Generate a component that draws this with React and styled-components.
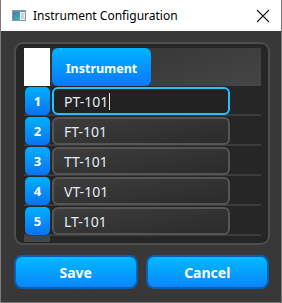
import styled, { createGlobalStyle } from "styled-components";

const GlobalStyle = createGlobalStyle`
  html, body {
    margin: 0;
    padding: 0;
    background: #ffffff;
  }
  * {
    box-sizing: border-box;
  }
`;

const Window = styled.div`
  width: 282px;
  height: 303px;
  display: flex;
  flex-direction: column;
  border: 1px solid #7b7b7b;
  border-top: none;
  font-family: "Noto Sans", "Open Sans", sans-serif;
`;

const TitleBar = styled.div`
  height: 31px;
  display: flex;
  align-items: center;
  background: #ffffff;
  padding: 0 10px 0 11px;
`;

const TitleText = styled.span`
  margin-left: 7px;
  font-size: 12px;
  color: #000000;
  flex: 1;
`;

const CloseButton = styled.div`
  width: 14px;
  height: 14px;
  margin-right: 1px;
  display: flex;
`;

const Body = styled.div`
  flex: 1;
  display: flex;
  flex-direction: column;
  gap: 10px;
  background: #383838;
  padding: 11px 11px 13px 13px;
`;

const Panel = styled.div`
  height: 203px;
  border: 2px solid #4d4d4d;
  border-radius: 9px;
  background: #262627;
  padding: 4px 7px 1px 8px;
  display: flex;
  flex-direction: column;
`;

const HeaderRow = styled.div`
  height: 38px;
  display: flex;
  background: linear-gradient(160deg, #303030 0%, #454545 100%);
`;

const Corner = styled.div`
  width: 26px;
  background: #ffffff;
`;

const HeaderCell = styled.div`
  width: 99px;
  margin-left: 2px;
  border-radius: 6px;
  background: linear-gradient(180deg, #00b3ff 0%, #0a78ff 100%);
  color: #ffffff;
  font-weight: 700;
  font-size: 12.5px;
  display: flex;
  align-items: center;
  justify-content: center;
  padding-top: 3px;
`;

const Row = styled.div`
  height: 30px;
  display: flex;
  align-items: center;
  background: linear-gradient(180deg, transparent 0, transparent 28px, #3c3c3c 28px);
`;

const RowNumber = styled.div`
  width: 25px;
  height: 28px;
  margin-left: 1px;
  border-radius: 5px;
  background: linear-gradient(180deg, #00b0ff 0%, #0a72f0 100%);
  color: #ffffff;
  font-weight: 700;
  font-size: 13px;
  display: flex;
  align-items: center;
  justify-content: center;
`;

const Field = styled.div`
  width: 178px;
  height: 28px;
  margin-left: 2px;
  border-radius: 6px;
  border: 2px solid ${(p) => (p.$focused ? "#1ec3ff" : "#555555")};
  background: ${(p) =>
    p.$focused ? "#222222" : "linear-gradient(170deg, #3d3d3d 0%, #2b2b2b 100%)"};
  color: #e3ebf4;
  font-size: 14px;
  display: flex;
  align-items: center;
  padding-left: 10px;
`;

const Caret = styled.span`
  display: inline-block;
  width: 1px;
  height: 17px;
  margin-left: 1px;
  background: #e8e8e8;
`;

const NumberFiller = styled.div`
  width: 26px;
  flex: 1;
  background: #444444;
`;

const Footer = styled.div`
  flex: 1;
  display: flex;
  gap: 8px;
  padding-right: 1px;
`;

const Button = styled.div`
  flex: 1;
  border-radius: 8px;
  border: 2px solid #0b5fae;
  background: linear-gradient(180deg, #00baff 0%, #0a86ff 100%);
  color: #ffffff;
  font-weight: 700;
  font-size: 14px;
  display: flex;
  align-items: center;
  justify-content: center;
`;

const WindowIcon = () => (
  <svg width="14" height="11" viewBox="0 0 14 11">
    <defs>
      <linearGradient id="ig" x1="0" y1="0" x2="1" y2="1">
        <stop offset="0" stopColor="#3d78b8" />
        <stop offset="1" stopColor="#4fb3a8" />
      </linearGradient>
    </defs>
    <rect x="0.5" y="0.5" width="13" height="10" fill="#e8ecf0" stroke="#8c96a0" />
    <rect x="1" y="2" width="7" height="8" fill="url(#ig)" />
    <rect x="1" y="1" width="12" height="1" fill="#6f8fb0" />
    <rect x="9" y="3" width="3" height="6" fill="#c9d4de" />
  </svg>
);

const CloseIcon = () => (
  <svg width="14" height="14" viewBox="0 0 14 14">
    <path d="M1 1 L13 13 M13 1 L1 13" stroke="#1a1a1a" strokeWidth="1.1" />
  </svg>
);

const instruments = ["PT-101", "FT-101", "TT-101", "VT-101", "LT-101"];

function App() {
  return (
    <>
      <GlobalStyle />
      <Window>
        <TitleBar>
          <WindowIcon />
          <TitleText>Instrument Configuration</TitleText>
          <CloseButton>
            <CloseIcon />
          </CloseButton>
        </TitleBar>
        <Body>
          <Panel>
            <HeaderRow>
              <Corner />
              <HeaderCell>Instrument</HeaderCell>
            </HeaderRow>
            {instruments.map((name, i) => (
              <Row key={name}>
                <RowNumber>{i + 1}</RowNumber>
                <Field $focused={i === 0}>
                  {name}
                  {i === 0 && <Caret />}
                </Field>
              </Row>
            ))}
            <NumberFiller />
          </Panel>
          <Footer>
            <Button>Save</Button>
            <Button>Cancel</Button>
          </Footer>
        </Body>
      </Window>
    </>
  );
}

export default App;
